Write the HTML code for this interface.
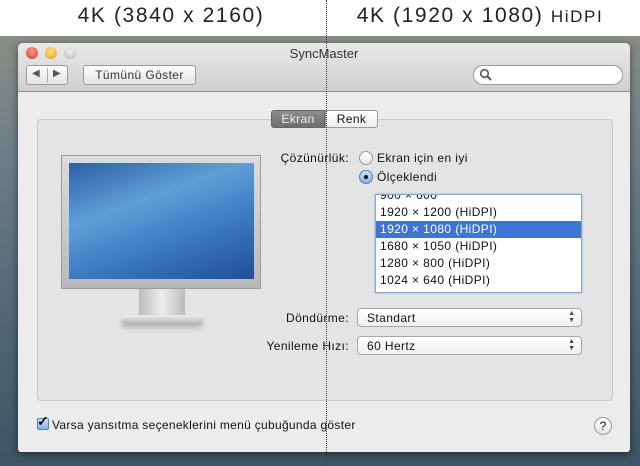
<!DOCTYPE html>
<html><head><meta charset="utf-8"><style>
*{margin:0;padding:0;box-sizing:border-box}
body{width:640px;height:466px;overflow:hidden;position:relative;font-family:"Liberation Sans",sans-serif;font-size:12px;color:#111;background:#fff;letter-spacing:0.4px}
.abs{position:absolute}
.desk{left:0;top:36px;width:640px;height:430px;background:linear-gradient(180deg,#8a8d86 0%,#6c7c86 30%,#4f6473 70%,#3d5565 100%)}
.win{left:18px;top:43px;width:612px;height:409px;background:#ececec;border-radius:5px 5px 3px 3px;overflow:hidden;box-shadow:0 2px 8px rgba(0,0,0,.5)}
.tb{left:0;top:0;width:612px;height:49px;background:linear-gradient(#e9e9e9,#cfcfcf);border-bottom:1px solid #8e8e8e}
.btn{background:linear-gradient(#fdfdfd,#e3e3e3);border:1px solid #9a9a9a;border-radius:3px}
.light{width:12px;height:12px;border-radius:50%;top:4px}
.grp{left:19px;top:76px;width:576px;height:282px;background:#e4e4e4;border:1px solid #c6c6c6;border-radius:4px}
.pop{height:19px;background:linear-gradient(#fff,#f0f0f0);border:1px solid #a8a8a8;border-radius:4px;padding:2px 0 0 9px;font-size:12px}
.arr{position:absolute;right:6px;top:1px;font-size:7px;line-height:7px;color:#444;letter-spacing:0}
.row{height:17px;padding-left:4px;line-height:17px;font-size:12px}
.lbl{right:281px;text-align:right}
</style></head><body>
<div class="abs" style="left:0;top:4px;width:342px;text-align:center;font-size:21px;color:#222;letter-spacing:1.6px">4K (3840 x 2160)</div>
<div class="abs" style="left:340px;top:4px;width:280px;text-align:center;font-size:21px;color:#222;letter-spacing:1.6px">4K (1920 x 1080) <span style="font-size:17px">HiDPI</span></div>
<div class="abs desk"></div>
<div class="abs win">
 <div class="abs tb"></div>
 <div class="abs light" style="left:8px;background:radial-gradient(circle at 50% 35%,#ff9a8a,#d83a2c)"></div>
 <div class="abs light" style="left:27px;background:radial-gradient(circle at 50% 35%,#ffe08a,#e2a21c)"></div>
 <div class="abs light" style="left:46px;background:radial-gradient(circle at 50% 35%,#f3f3f3,#b8b8b8)"></div>
 <div class="abs" style="left:0;top:3px;width:612px;text-align:center;font-size:13px;color:#333;letter-spacing:0">SyncMaster</div>
 <div class="abs btn" style="left:8px;top:22px;width:42px;height:20px"></div>
 <div class="abs" style="left:29px;top:25px;width:1px;height:14px;background:#aaa"></div>
 <div class="abs" style="left:14px;top:25px;font-size:10px;color:#555">◀</div>
 <div class="abs" style="left:35px;top:25px;font-size:10px;color:#555">▶</div>
 <div class="abs btn" style="left:65px;top:22px;width:113px;height:20px;text-align:center;font-size:12px;line-height:18px;color:#333">Tümünü Göster</div>
 <div class="abs" style="left:455px;top:22px;width:150px;height:20px;background:#fff;border:1px solid #999;border-radius:10px"></div>
 <svg class="abs" style="left:461px;top:25px" width="14" height="14"><circle cx="5.5" cy="5.5" r="3.8" fill="none" stroke="#555" stroke-width="1.6"/><line x1="8.3" y1="8.3" x2="12" y2="12" stroke="#555" stroke-width="2"/></svg>
 <div class="abs grp"></div>
 <div class="abs" style="left:253px;top:67px;width:54px;height:18px;background:linear-gradient(#8d8d8d,#6e6e6e);border:1px solid #666;border-radius:3px 0 0 3px;color:#eee;text-align:center;line-height:16px">Ekran</div>
 <div class="abs" style="left:307px;top:67px;width:53px;height:18px;background:linear-gradient(#fff,#eee);border:1px solid #999;border-radius:0 3px 3px 0;text-align:center;line-height:16px">Renk</div>
 <!-- monitor -->
 <div class="abs" style="left:43px;top:112px;width:200px;height:134px;background:linear-gradient(#dcdcdc,#b9b9b9);border:1px solid #9c9c9c"></div>
 <div class="abs" style="left:51px;top:120px;width:185px;height:116px;background:linear-gradient(160deg,#2c5fa8 0%,#5f9fd8 35%,#3f7fc4 60%,#1f4f98 100%)"></div>
 <div class="abs" style="left:121px;top:246px;width:46px;height:30px;background:linear-gradient(90deg,#bbb,#eee,#bbb)"></div>
 <div class="abs" style="left:104px;top:272px;width:80px;height:8px;background:linear-gradient(#eee,#bbb);border-radius:2px;box-shadow:0 4px 6px rgba(0,0,0,.25)"></div>
 <!-- right side -->
 <div class="abs lbl" style="top:108px">Çözünürlük:</div>
 <div class="abs" style="left:341px;top:108px;width:14px;height:14px;border-radius:50%;border:1px solid #999;background:linear-gradient(#fff,#e6e6e6)"></div>
 <div class="abs" style="left:359px;top:108px">Ekran için en iyi</div>
 <div class="abs" style="left:341px;top:127px;width:14px;height:14px;border-radius:50%;border:1px solid #5a7fb0;background:linear-gradient(#cfe3f8,#7fb0e3)"></div>
 <div class="abs" style="left:346px;top:132px;width:4px;height:4px;border-radius:50%;background:#111"></div>
 <div class="abs" style="left:359px;top:127px">Ölçeklendi</div>
 <div class="abs" style="left:357px;top:151px;width:207px;height:99px;background:#fff;border:1px solid #8aa6c8;overflow:hidden;box-shadow:0 0 2px #7aa7e0">
  <div class="row" style="margin-top:-8px">900 × 600</div>
  <div class="row">1920 × 1200 (HiDPI)</div>
  <div class="row" style="background:#3d74d6;color:#fff">1920 × 1080 (HiDPI)</div>
  <div class="row">1680 × 1050 (HiDPI)</div>
  <div class="row">1280 × 800 (HiDPI)</div>
  <div class="row">1024 × 640 (HiDPI)</div>
 </div>
 <div class="abs lbl" style="top:268px">Döndürme:</div>
 <div class="abs pop" style="left:339px;top:265px;width:225px">Standart<span class="arr">▲<br>▼</span></div>
 <div class="abs lbl" style="top:296px">Yenileme Hızı:</div>
 <div class="abs pop" style="left:339px;top:293px;width:225px">60 Hertz<span class="arr">▲<br>▼</span></div>
 <div class="abs" style="left:19px;top:375px;width:12px;height:12px;border:1px solid #5a7fb0;border-radius:2px;background:linear-gradient(#cfe3f8,#7fb0e3)"></div>
 <div class="abs" style="left:19px;top:370px;font-size:14px;font-weight:bold">✓</div>
 <div class="abs" style="left:34px;top:375px;font-size:12px;letter-spacing:0.3px">Varsa yansıtma seçeneklerini menü çubuğunda göster</div>
 <div class="abs" style="left:576px;top:374px;width:18px;height:18px;border-radius:50%;border:1px solid #999;background:linear-gradient(#fff,#e4e4e4);text-align:center;line-height:16px;font-size:12px;letter-spacing:0">?</div>
</div>
<div class="abs" style="left:326px;top:0;width:0;height:466px;border-left:1px dotted #333"></div>
</body></html>
